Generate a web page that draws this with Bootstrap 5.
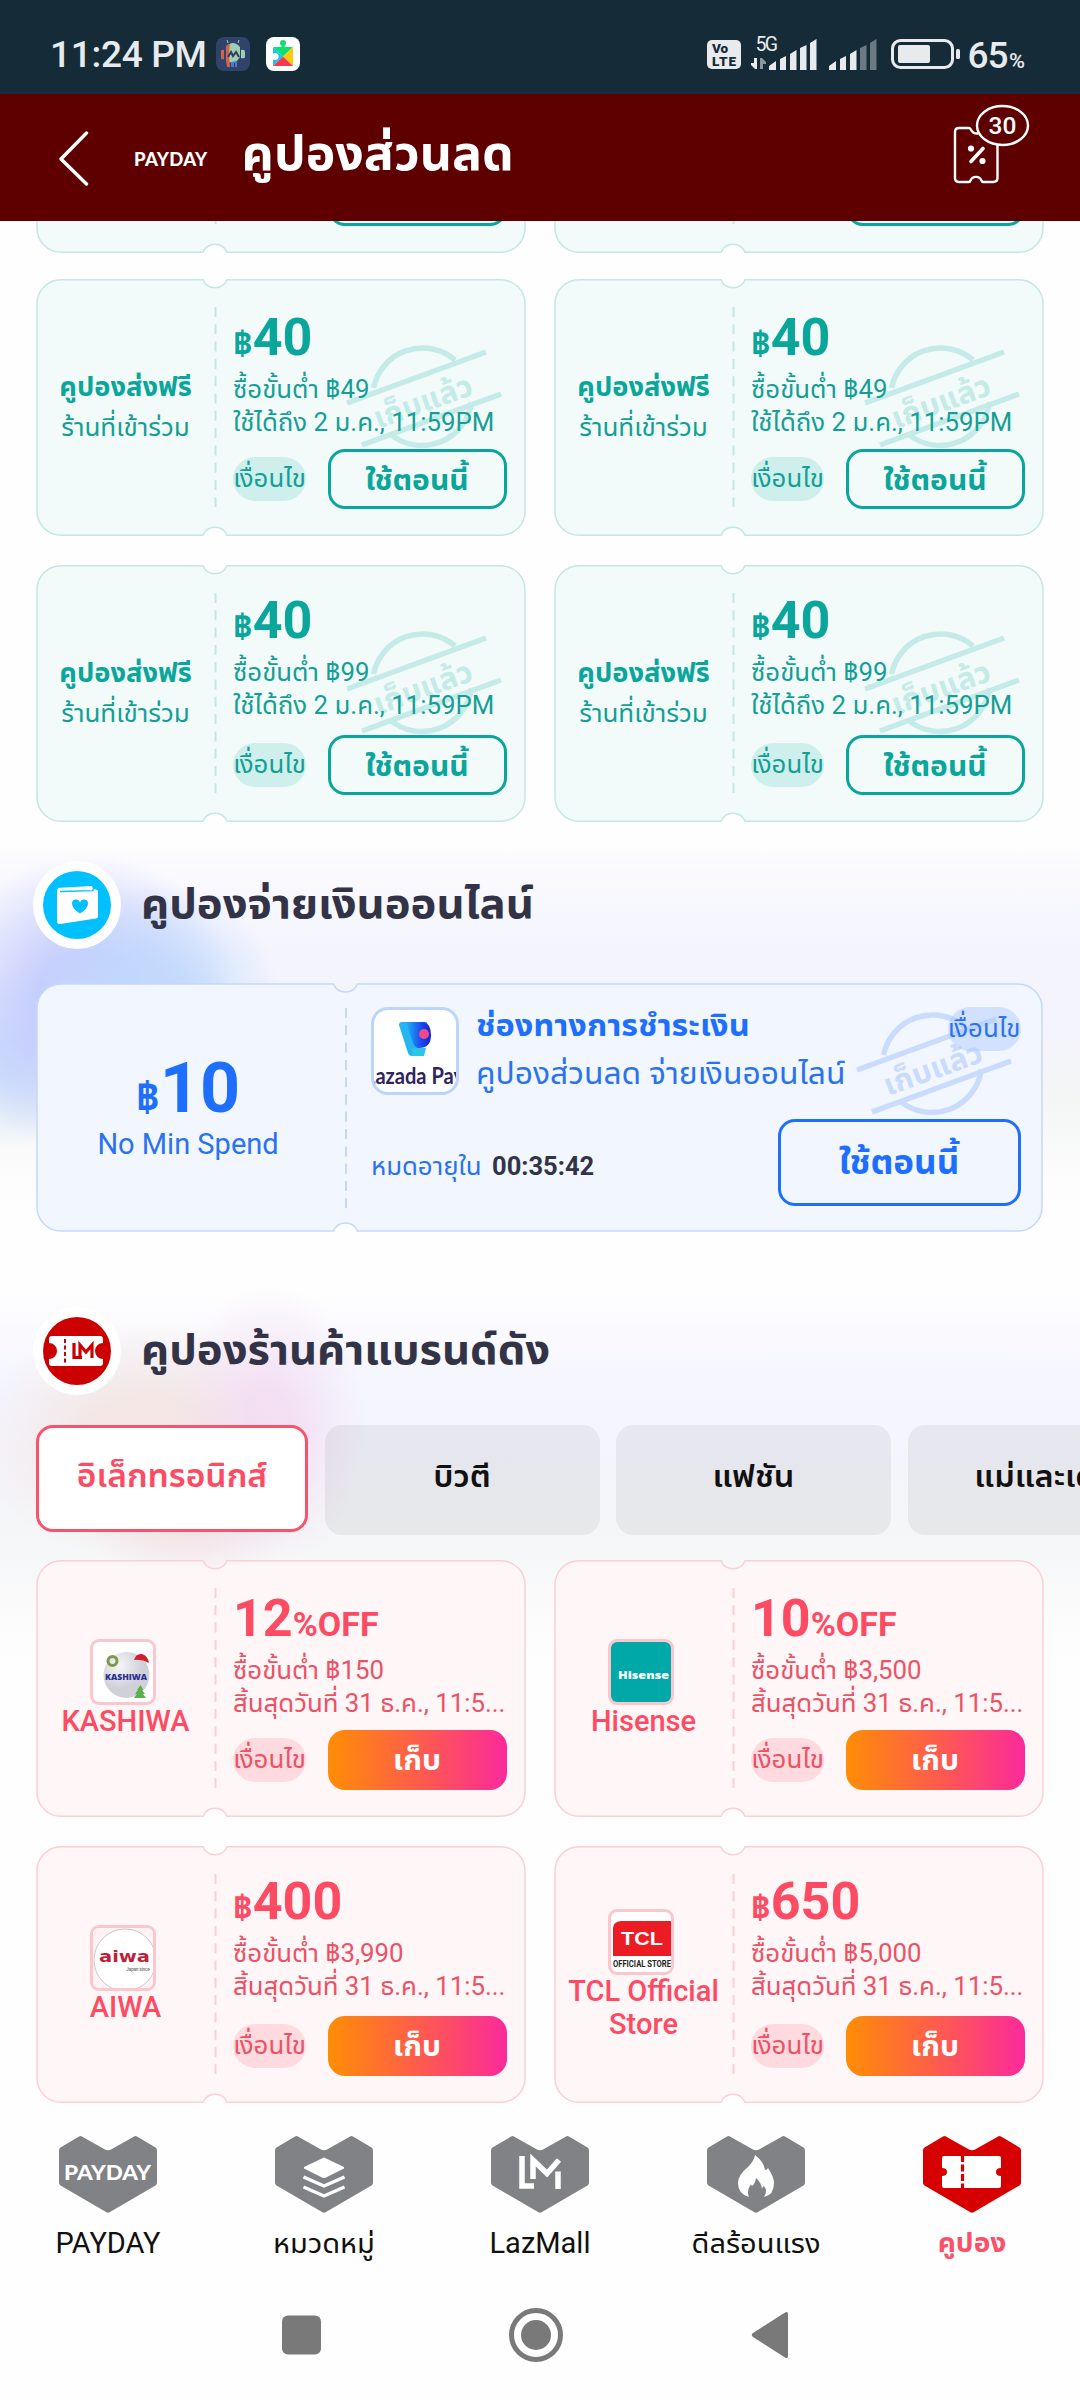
<!DOCTYPE html>
<html lang="th">
<head>
<meta charset="utf-8">
<meta name="viewport" content="width=device-width, initial-scale=1">
<title>คูปองส่วนลด</title>
<link href="https://cdn.jsdelivr.net/npm/bootstrap@5.3.0/dist/css/bootstrap.min.css" rel="stylesheet">
<style>
body{width:1080px;height:2400px;overflow:hidden;background:#fefefe;font-family:Roboto,"Noto Sans Thai UI","Noto Sans Thai","Noto Sans",sans-serif;font-size:25.8px;line-height:33px;color:#111}
svg{display:block;flex:none}
.statusbar{height:94px;background:#152b37;color:#e8ebed;padding:0 53px 0 50px}
.clock{font-size:37px;line-height:50px;font-weight:500;width:158px;white-space:nowrap;margin-top:9px;letter-spacing:-.3px}
.titlebar{height:127px;background:#5e0000;color:#fff;padding:0 50px 0 58px}
.titlebar h1{font-size:50px;line-height:70px;font-weight:700;margin:0 0 9px 34px}
.payday{font:900 18.5px/26px Lato,sans-serif;letter-spacing:.3px;margin:3px 0 0 44px}
.wrap{padding-left:36px;padding-right:36px}
.strip{height:32px;overflow:hidden}
.pair{display:flex;gap:28.5px}
.ticket{position:relative;isolation:isolate;width:489.5px;height:257px;display:flex;flex:none}
.ticket>.bg{position:absolute;left:0;top:0;z-index:-2;fill:var(--fill);stroke:var(--line);stroke-width:1.5}
.ticket>.stamp{position:absolute;left:306px;top:63px;z-index:-1}
.green{--ink:#0aa69c;--soft:#149f96;--fill:#f2fbfa;--line:#c4e7e5;--chip:#cfefed;--mark:#c5ebe8}
.pink{--ink:#fc4b62;--soft:#ec5266;--fill:#fff6f7;--line:#fccfd5;--chip:#ffdade}
.blue{--ink:#1f6fff;--soft:#2b72ee;--fill:#f1f6ff;--line:#c3d8fb;--chip:rgba(170,200,255,.45);--mark:#cadcfe}
.stamp{color:var(--mark)}
.who{width:179px;color:var(--ink);text-align:center;font-size:29px;font-weight:500}
.who .head{font-size:27.3px;line-height:38px;font-weight:700;position:relative;top:-2px}
.who .sub{font-size:26px;line-height:38px;font-weight:400;color:var(--soft)}
.logo{width:66px;height:66px;border:3px solid #fcc6cd;border-radius:9px;overflow:hidden;background:#fff;flex:none;margin-right:6px}
.info{flex:1;padding:31px 19px 27px 18px;color:var(--soft);white-space:nowrap}
.low .info{padding-top:28px}
.price{font-size:52px;line-height:56px;font-weight:700;color:var(--ink);margin-bottom:1.500px}
.price small{font-size:34px;font-weight:700}
.cond{background:var(--chip);width:73px;height:44px;border-radius:22px;color:var(--soft);line-height:42px;display:flex;justify-content:center;white-space:nowrap;font-size:25.8px}
.use{width:179px;height:60px;border-radius:17px;font-size:30px;line-height:53px;font-weight:700;padding:0;border:3px solid var(--ink);color:var(--ink)}
.use:hover{color:var(--ink)}
.grab{border:0;background:linear-gradient(90deg,#ff8d05,#fe5b4e 52%,#fb2a9b);color:#fff;line-height:56px}
.sect-pay{height:468px;padding-top:39px;background:
 radial-gradient(ellipse 130px 110px at 150px 172px,rgba(190,218,252,.75) 30%,rgba(190,218,252,0)),
 radial-gradient(ellipse 150px 150px at 88px 180px,rgba(196,202,253,.9) 35%,rgba(196,202,253,0)),
 radial-gradient(ellipse 90px 90px at 10px 235px,rgba(190,218,252,.7) 20%,rgba(190,218,252,0)),
 linear-gradient(#fefefe 20px,#f8f8fe 70px,#f4f4fd 130px,#f4f4fd 200px,#f4f5f5 275px,#fefefe 380px)}
.sect-brand{height:813px;padding-top:17px;background:
 radial-gradient(ellipse 95px 140px at 270px 135px,rgba(243,218,242,.8) 20%,rgba(243,218,242,0)),
 radial-gradient(ellipse 175px 120px at 150px 150px,rgba(243,228,224,.85) 35%,rgba(243,228,224,0)),
 radial-gradient(ellipse 110px 60px at 190px 230px,rgba(243,220,228,.85) 10%,rgba(243,220,228,0)),
 linear-gradient(#fefefe,#f7f7fe 70px,#f4f5ff 110px,#f4f5fc 170px,#f5f6f7 245px,#fefefe 370px)}
.heading h2{font-size:43.6px;line-height:60px;font-weight:700;margin:0 0 2px 20px;color:#333347}
.disc{width:88px;height:88px;background:#fff;border-radius:50%}
.wide{width:1006.5px;height:249px;margin-top:34px}
.wide>.stamp{left:816px;top:26px}
.amount{width:310px;text-align:center;color:var(--ink);padding:0 6px 4px 0}
.amount b{font-size:70px;line-height:76px}
.amount b small{font-size:41px;font-weight:700}
.amount span{font-size:29px;line-height:36px;color:var(--soft);margin-top:-10px}
.paylogo{width:88px;height:88px;border:3px solid #bcd5fb;border-radius:17px;overflow:hidden;background:#fff}
.tabs{display:flex;gap:16.5px;margin-top:30px;white-space:nowrap;overflow:hidden;margin-right:-36px}
.tabs a{flex:none;width:275px;height:110px;border-radius:17px;background:rgba(0,0,0,.055);color:#111;text-decoration:none;text-align:center;font-weight:600;font-size:32.5px;line-height:103px}
.tabs a.on{width:272px;height:107px;border:3px solid #f9536b;background:#fff;color:#fc4b62;line-height:96px;font-size:33.6px}
.navs{height:187px;padding-top:33px}
.navs a{width:216px;color:#111;text-decoration:none;text-align:center;font-size:29px;line-height:40px}
.navs svg{margin:0 auto 10px}
.sys{height:110px;padding:0 10px 20px 0}
</style>
</head>
<body>
<svg width="0" height="0" class="position-absolute">
 <defs>
  <symbol id="tk" viewBox="0 0 490 257"><path d="M25 .8H167a13 13 0 0 0 24 0H465a24 24 0 0 1 24 24V232.200a24 24 0 0 1-24 24H191a13 13 0 0 0-24 0H25a24 24 0 0 1-24-24V24.800a24 24 0 0 1 24-24z"/><line x1="179.500" y1="28" x2="179.500" y2="228" stroke-width="2" stroke-dasharray="10 7.300"/></symbol>
  <symbol id="st" viewBox="0 0 160 112"><g fill="none" stroke="currentColor" stroke-width="5.500"><path d="M31.500 46A50 50 0 0 1 113 18M48 92A50 50 0 0 0 129.500 60"/><path d="M5 61L144 10M20 103L159 52"/></g><text x="0" y="0" transform="translate(36 87) rotate(-20)" font-size="32" font-weight="700" fill="currentColor" textLength="103" lengthAdjust="spacingAndGlyphs">เก็บแล้ว</text></symbol>
  <symbol id="ht" viewBox="0 0 98 77"><path d="M22 0L46 13.500Q49 14.800 52 13.500L76 0Q77 0 78 .6L96.500 11.500Q98 12.500 98 14V47Q98 48.500 96.500 49.400L51 76Q49 77.400 47 76L1.500 49.400Q0 48.500 0 47V14Q0 12.500 1.500 11.500L20 .6Q21 0 22 0z"/></symbol>
 </defs>
</svg>

<header>
 <div class="statusbar d-flex justify-content-between align-items-start">
  <div class="d-flex" style="padding-top:21px">
   <div class="clock">11:24 PM</div>
   <svg class="ms-2" width="34" height="34" viewBox="0 0 34 34" style="margin-top:16px"><rect width="34" height="34" rx="8" fill="#2f436b"/><path d="M10 10q7-8 14 0v10q-5 8-11 5l-3-3z" fill="#9fcfb0"/><path d="M12 6l-1-3M22 6l1-3" stroke="#9fcfb0"/><path d="M10 9q2-2 4-2l-1 10 1 13h-3l-1-6zM5 14q0-2 3-1v9q-3 1-3-1z" fill="#d0644c"/><path d="M25 13q4-1 4 2v5q0 2-4 1z" fill="#9fcfb0"/><path d="M15 25l6-1v6h-2v-4h-1v4h-3z" fill="#4e79c9"/><path d="M12 20l3-5 2 4 3-4 3 5" fill="none" stroke="#2f3b60" stroke-width="2"/></svg>
   <svg width="34" height="34" viewBox="0 0 34 34" style="margin:16px 0 0 16px"><rect width="34" height="34" rx="8" fill="#fff"/><path d="M7 10h20L17 19.500z" fill="#0be070"/><circle cx="17" cy="6" r="3" fill="#0be070"/><path d="M15.500 7h3v4h-3z" fill="#0be070"/><path d="M7 10l10 9.500L7 29z" fill="#14c4f5"/><circle cx="9" cy="19.500" r="3.500" fill="#fff"/><path d="M27 10v19l-10-9.500z" fill="#fdc90d"/><path d="M7 29l10-9.500L27 29z" fill="#f43a4a"/></svg>
  </div>
  <svg width="320" height="94" viewBox="707 0 320 94" fill="#e8ebed" font-family="Roboto">
   <rect x="707" y="40" width="34" height="29" rx="5"/><g font-size="13.500" font-weight="900" fill="#152b37"><text x="712" y="53">Vo</text><text x="712" y="66" textLength="24">LTE</text></g>
   <text x="755.500" y="51" font-size="19.500" textLength="22.500">5G</text>
   <path d="M754 58h3v11h-2l-4-4v-2h3z"/><path d="M760 58h2l4 4v2h-3v5h-3z" fill="#8a959c"/>
   <path d="M769 70v-4l7-5v9zM780 70v-11l6-3v14zM790 70v-16l6.500-4v20zM800 70v-22l6.500-3v25zM810 70v-27l6.500-4v31zM829 70v-4l7-5v9zM840 70v-11l6-3v14zM850 70v-16l6.500-4v20z"/>
   <path d="M860 70v-22l6.500-3v25zM870 70v-27l6.500-4v31z" fill="#6b7a82"/>
   <rect x="892.500" y="40.500" width="60" height="27" rx="8" fill="none" stroke="#e8ebed" stroke-width="3"/><rect x="898" y="45" width="32" height="18" rx="2"/><rect x="956" y="49" width="4" height="10" rx="1.500"/>
   <text x="967.500" y="68" font-size="37" font-weight="500" textLength="41">65</text><text x="1009" y="67.500" font-size="20" font-weight="500" textLength="16" lengthAdjust="spacingAndGlyphs">%</text>
  </svg>
 </div>
 <div class="titlebar d-flex align-items-center">
  <svg width="32" height="56" viewBox="0 0 32 56"><path d="M28.500 3L3 29l25.500 25" fill="none" stroke="#fff" stroke-width="3.400" stroke-linecap="round" stroke-linejoin="round"/></svg>
  <div class="payday">PAYDAY</div>
  <h1>คูปองส่วนลด</h1>
  <svg class="ms-auto" width="78" height="82" viewBox="952 103 78 82" style="margin-bottom:27px"><g fill="none" stroke="#fff" stroke-width="2.400"><path d="M969 128h-10q-4 0-4 4v46q0 4 4 4h10q1 0 1.500-1.500a6 6 0 0 1 11 0q.5 1.500 1.500 1.500h10q4.500 0 4.500-4v-46"/><path d="M969 128q1 0 1.500 1 2.500 5 7.500 4.500"/><ellipse cx="1002.500" cy="125.500" rx="25.500" ry="19.500" fill="#5e0000"/><path d="M983 148.500L971 161.500" stroke-width="3.600" stroke-linecap="round"/></g><circle cx="971" cy="148.500" r="3.100" fill="#fff"/><circle cx="982.500" cy="161" r="3.100" fill="#fff"/><text x="1002.500" y="133.500" font-size="24.500" font-weight="500" fill="#fff" text-anchor="middle" font-family="Roboto">30</text></svg>
 </div>
</header>

<main>
 <div class="wrap pair strip align-items-end">
  <div class="ticket green"><svg class="bg" width="490" height="257"><use href="#tk"/></svg><div class="who"></div><div class="info d-flex"><span class="btn use mt-auto ms-auto"></span></div></div>
  <div class="ticket green"><svg class="bg" width="490" height="257"><use href="#tk"/></svg><div class="who"></div><div class="info d-flex"><span class="btn use mt-auto ms-auto"></span></div></div>
 </div>

 <div class="wrap pair" style="margin-top:26px">
  <div class="ticket green"><svg class="bg" width="490" height="257"><use href="#tk"/></svg><svg class="stamp" width="160" height="112"><use href="#st"/></svg>
   <div class="who d-flex flex-column justify-content-center"><div class="head">คูปองส่งฟรี</div><div class="sub">ร้านที่เข้าร่วม</div></div>
   <div class="info d-flex flex-column"><div class="price"><small>฿</small>40</div><div>ซื้อขั้นต่ำ ฿49</div><div>ใช้ได้ถึง 2 ม.ค., 11:59PM</div><div class="d-flex justify-content-between align-items-center mt-auto"><span class="cond">เงื่อนไข</span><button class="btn use">ใช้ตอนนี้</button></div></div></div>
  <div class="ticket green"><svg class="bg" width="490" height="257"><use href="#tk"/></svg><svg class="stamp" width="160" height="112"><use href="#st"/></svg>
   <div class="who d-flex flex-column justify-content-center"><div class="head">คูปองส่งฟรี</div><div class="sub">ร้านที่เข้าร่วม</div></div>
   <div class="info d-flex flex-column"><div class="price"><small>฿</small>40</div><div>ซื้อขั้นต่ำ ฿49</div><div>ใช้ได้ถึง 2 ม.ค., 11:59PM</div><div class="d-flex justify-content-between align-items-center mt-auto"><span class="cond">เงื่อนไข</span><button class="btn use">ใช้ตอนนี้</button></div></div></div>
 </div>
 <div class="wrap pair low" style="margin-top:29px">
  <div class="ticket green"><svg class="bg" width="490" height="257"><use href="#tk"/></svg><svg class="stamp" width="160" height="112"><use href="#st"/></svg>
   <div class="who d-flex flex-column justify-content-center"><div class="head">คูปองส่งฟรี</div><div class="sub">ร้านที่เข้าร่วม</div></div>
   <div class="info d-flex flex-column"><div class="price"><small>฿</small>40</div><div>ซื้อขั้นต่ำ ฿99</div><div>ใช้ได้ถึง 2 ม.ค., 11:59PM</div><div class="d-flex justify-content-between align-items-center mt-auto"><span class="cond">เงื่อนไข</span><button class="btn use">ใช้ตอนนี้</button></div></div></div>
  <div class="ticket green"><svg class="bg" width="490" height="257"><use href="#tk"/></svg><svg class="stamp" width="160" height="112"><use href="#st"/></svg>
   <div class="who d-flex flex-column justify-content-center"><div class="head">คูปองส่งฟรี</div><div class="sub">ร้านที่เข้าร่วม</div></div>
   <div class="info d-flex flex-column"><div class="price"><small>฿</small>40</div><div>ซื้อขั้นต่ำ ฿99</div><div>ใช้ได้ถึง 2 ม.ค., 11:59PM</div><div class="d-flex justify-content-between align-items-center mt-auto"><span class="cond">เงื่อนไข</span><button class="btn use">ใช้ตอนนี้</button></div></div></div>
 </div>

 <section class="sect-pay wrap">
  <div class="heading d-flex align-items-center" style="margin-left:-3px">
   <div class="disc d-flex align-items-center justify-content-center"><svg width="68" height="68" viewBox="0 0 68 68"><circle cx="34" cy="34" r="34" fill="#00c0ff"/><path d="M14 20q0-3 3-3.300L49 15l1 3 3 .6q2 .4 2 2V45q0 2-2 2.500L17 53q-3 .4-3-2.500z" fill="#fff"/><path d="M17 20.500l33-.8v-2" fill="none" stroke="#00c0ff" stroke-width="1.300"/><path d="M37 42.500q-8-5-8-10 0-4 4-4 3 0 4 3 1-3 4-3 4 0 4 4 0 5-8 10z" fill="#00c0ff"/></svg></div>
   <h2>คูปองจ่ายเงินออนไลน์</h2>
  </div>
  <div class="ticket blue wide">
   <svg class="bg" width="1007" height="249" viewBox="0 0 1007 249"><path d="M25 1H297.500a13 13 0 0 0 24 0H982a24 24 0 0 1 24 24V224a24 24 0 0 1-24 24H321.500a13 13 0 0 0-24 0H25a24 24 0 0 1-24-24V25a24 24 0 0 1 24-24z"/><line x1="310" y1="25" x2="310" y2="225" stroke-width="2" stroke-dasharray="10 7.300"/></svg>
   <svg class="stamp" width="160" height="112"><use href="#st"/></svg>
   <div class="amount d-flex flex-column justify-content-center"><b><small>฿</small>10</b><span>No Min Spend</span></div>
   <div class="flex-grow-1 d-flex flex-column justify-content-between text-nowrap" style="padding:24px 22px 26px 25px;color:var(--soft)">
    <div class="d-flex">
     <div class="paylogo"><svg width="82" height="82" viewBox="0 0 82 82"><defs><linearGradient id="pv" x1="0" x2="1"><stop stop-color="#20b4f4"/><stop offset=".6" stop-color="#1a4bf0"/><stop offset="1" stop-color="#1420d8"/></linearGradient></defs><path d="M25 15q0-3 3-3h25L42 46h-4q-3 0-4-3z" fill="#25b6f2"/><path d="M32 12h18q7 2 7 13 0 13-12 13-5 0-7-8z" fill="url(#pv)"/><circle cx="50" cy="24" r="5" fill="#f04a86"/><path d="M38 38h14l-2 8H38z" fill="#2cc5ea"/><text x="-9" y="74" font-family="Lato" font-weight="700" font-size="23" fill="#2d2460" textLength="99" lengthAdjust="spacingAndGlyphs">Lazada Pay</text></svg></div>
     <div class="flex-grow-1" style="padding-left:17px"><div style="font-size:32.500px;line-height:36px;font-weight:700;color:var(--ink)">ช่องทางการชำระเงิน</div><div style="font-size:31.800px;line-height:61px">คูปองส่วนลด จ่ายเงินออนไลน์</div></div>
     <span class="cond">เงื่อนไข</span>
    </div>
    <div class="d-flex justify-content-between align-items-end"><div style="padding-bottom:20px;line-height:40px">หมดอายุใน <b class="ms-1" style="font-size:25.500px;color:#333346">00:35:42</b></div><button class="btn use" style="width:243px;height:87px;font-size:35px;line-height:70px">ใช้ตอนนี้</button></div>
   </div>
  </div>
 </section>

 <section class="sect-brand wrap">
  <div class="heading d-flex align-items-center" style="margin-left:-3px">
   <div class="disc d-flex align-items-center justify-content-center"><svg width="68" height="68" viewBox="0 0 68 68"><circle cx="34" cy="34" r="34" fill="#c00"/><path d="M9 19H57q3 0 3 3v4a8 8 0 0 0 0 16v4q0 3-3 3H9q-3 0-3-3v-4a8 8 0 0 0 0-16v-4q0-3 3-3z" fill="#fff"/><path d="M22 22v24" stroke="#c00" stroke-width="2" stroke-dasharray="4 2.500"/><path d="M31 26v14.500h8M37 40V28l6 7 6-7v13" fill="none" stroke="#c00" stroke-width="3.200"/></svg></div>
   <h2>คูปองร้านค้าแบรนด์ดัง</h2>
  </div>
  <nav class="tabs"><a class="on" href="#">อิเล็กทรอนิกส์</a><a href="#">บิวตี</a><a href="#">แฟชัน</a><a href="#">แม่และเด็ก</a></nav>
  <div class="pair" style="margin-top:25px">
   <div class="ticket pink"><svg class="bg" width="490" height="257"><use href="#tk"/></svg>
    <div class="who d-flex flex-column justify-content-center align-items-center"><div class="logo"><svg width="60" height="60" viewBox="0 0 60 60"><defs><radialGradient id="ball" cx=".35" cy=".3"><stop stop-color="#f6f6fa"/><stop offset="1" stop-color="#cfd0d8"/></radialGradient></defs><circle cx="33.500" cy="33" r="23" fill="url(#ball)"/><path d="M41 18q2-7 8-6 6 2 7 9-7-4-15-3z" fill="#d5202a"/><circle cx="19.500" cy="19" r="4.500" fill="none" stroke="#7d9a45" stroke-width="3"/><path d="M47.500 43l3 5h-1.500l3 4h-2l3 4H41l3-4h-2l3-4h-1z" fill="#5bb04b"/><text x="12" y="37.500" font-family="Open Sans" font-weight="800" font-size="9.500" fill="#2b3190" textLength="42" lengthAdjust="spacingAndGlyphs">KASHIWA</text></svg></div>KASHIWA</div>
    <div class="info d-flex flex-column"><div class="price">12<small>%OFF</small></div><div>ซื้อขั้นต่ำ ฿150</div><div>สิ้นสุดวันที่ 31 ธ.ค., 11:5...</div><div class="d-flex justify-content-between align-items-center mt-auto"><span class="cond">เงื่อนไข</span><button class="btn use grab">เก็บ</button></div></div></div>
   <div class="ticket pink"><svg class="bg" width="490" height="257"><use href="#tk"/></svg>
    <div class="who d-flex flex-column justify-content-center align-items-center"><div class="logo"><svg width="60" height="60" viewBox="0 0 60 60"><rect width="60" height="60" fill="#00a9a8"/><text x="7" y="37" font-family="Open Sans" font-weight="800" font-size="11" fill="#fff" textLength="51" lengthAdjust="spacingAndGlyphs">Hisense</text></svg></div>Hisense</div>
    <div class="info d-flex flex-column"><div class="price">10<small>%OFF</small></div><div>ซื้อขั้นต่ำ ฿3,500</div><div>สิ้นสุดวันที่ 31 ธ.ค., 11:5...</div><div class="d-flex justify-content-between align-items-center mt-auto"><span class="cond">เงื่อนไข</span><button class="btn use grab">เก็บ</button></div></div></div>
  </div>
  <div class="pair low" style="margin-top:29px">
   <div class="ticket pink"><svg class="bg" width="490" height="257"><use href="#tk"/></svg>
    <div class="who d-flex flex-column justify-content-center align-items-center"><div class="logo"><svg width="60" height="60" viewBox="0 0 60 60"><rect width="60" height="60" fill="#fdf3f4"/><circle cx="32" cy="32" r="31" fill="#fff" stroke="#bbb" stroke-width=".8"/><text x="6" y="34" font-family="DejaVu Sans" font-weight="700" font-size="15" fill="#c01f3c" textLength="51" lengthAdjust="spacingAndGlyphs">aiwa</text><text x="33" y="43" font-family="Roboto" font-size="5" fill="#777" textLength="24">Japan since</text></svg></div>AIWA</div>
    <div class="info d-flex flex-column"><div class="price"><small>฿</small>400</div><div>ซื้อขั้นต่ำ ฿3,990</div><div>สิ้นสุดวันที่ 31 ธ.ค., 11:5...</div><div class="d-flex justify-content-between align-items-center mt-auto"><span class="cond">เงื่อนไข</span><button class="btn use grab">เก็บ</button></div></div></div>
   <div class="ticket pink"><svg class="bg" width="490" height="257"><use href="#tk"/></svg>
    <div class="who d-flex flex-column justify-content-center align-items-center"><div class="logo"><svg width="60" height="60" viewBox="0 0 60 60"><path d="M2 44V16Q2 10 10 9H60V44z" fill="#ec1c24"/><text x="10" y="33" font-family="Liberation Sans" font-weight="700" font-size="18" fill="#fff" textLength="42" lengthAdjust="spacingAndGlyphs">TCL</text><text x="2" y="55" font-family="Roboto" font-weight="700" font-size="8.500" fill="#222" textLength="58" lengthAdjust="spacingAndGlyphs">OFFICIAL STORE</text></svg></div>TCL Official<br>Store</div>
    <div class="info d-flex flex-column"><div class="price"><small>฿</small>650</div><div>ซื้อขั้นต่ำ ฿5,000</div><div>สิ้นสุดวันที่ 31 ธ.ค., 11:5...</div><div class="d-flex justify-content-between align-items-center mt-auto"><span class="cond">เงื่อนไข</span><button class="btn use grab">เก็บ</button></div></div></div>
  </div>
 </section>
</main>

<nav class="navs d-flex">
 <a href="#"><svg width="98" height="77" viewBox="0 0 98 77"><use href="#ht" fill="#808285"/><text x="5" y="43.500" font-family="Lato" font-weight="900" font-size="21.500" fill="#fff" textLength="87" lengthAdjust="spacingAndGlyphs">PAYDAY</text></svg>PAYDAY</a>
 <a href="#"><svg width="98" height="77" viewBox="0 0 98 77"><use href="#ht" fill="#808285"/><path d="M49 21.500L69 31v1.500L51 41.500q-2 1-4 0L29 32.500V31z" fill="#fff"/><path d="M28.500 41L49 50l20.500-9M28.500 51L49 60l20.500-9" fill="none" stroke="#fff" stroke-width="3.400"/></svg>หมวดหมู่</a>
 <a href="#"><svg width="98" height="77" viewBox="0 0 98 77"><use href="#ht" fill="#808285"/><path d="M31 20V50H43M42 43V24L56 37.500 68 24M67 35.500V53" fill="none" stroke="#fff" stroke-width="5.500"/></svg>LazMall</a>
 <a href="#"><svg width="98" height="77" viewBox="0 0 98 77"><use href="#ht" fill="#808285"/><path d="M48 19q9 7 10 15 2 0 3-2 6 9 6 15 0 12-10 14 4-6 0-11-2 1-2 3-1-7-6-11-1 6-4 8-1-1-1-2-5 7-2 13-11-3-11-14 0-8 10-16 6-6 7-12z" fill="#fff"/></svg>ดีลร้อนแรง</a>
 <a href="#" style="color:#fa5169;font-weight:700;font-size:28px"><svg width="98" height="77" viewBox="0 0 98 77"><use href="#ht" fill="#d60000"/><path d="M21 20H76q2 0 2 2v10q-5 0-5 4t5 4v10q0 2-2 2H21q-2 0-2-2V40q5 0 5-4t-5-4V22q0-2 2-2z" fill="#fff"/><path d="M39.500 19v34" stroke="#d60000" stroke-width="3.200" stroke-dasharray="7 2.500"/></svg>คูปอง</a>
</nav>
<div class="sys d-flex justify-content-center align-items-center">
 <svg width="507" height="56" viewBox="282 2307 507 56" fill="#797979"><rect x="282" y="2315.500" width="39" height="39" rx="6"/><circle cx="536" cy="2335" r="24.500" fill="none" stroke="#797979" stroke-width="5"/><circle cx="536" cy="2335" r="15"/><path d="M788 2314v42q0 3-3 1.500L753 2337q-2.500-2 0-4L785 2312.500q3-1.500 3 1.500z"/></svg>
</div>
<script src="https://cdn.jsdelivr.net/npm/bootstrap@5.3.0/dist/js/bootstrap.bundle.min.js"></script>
</body>
</html>
